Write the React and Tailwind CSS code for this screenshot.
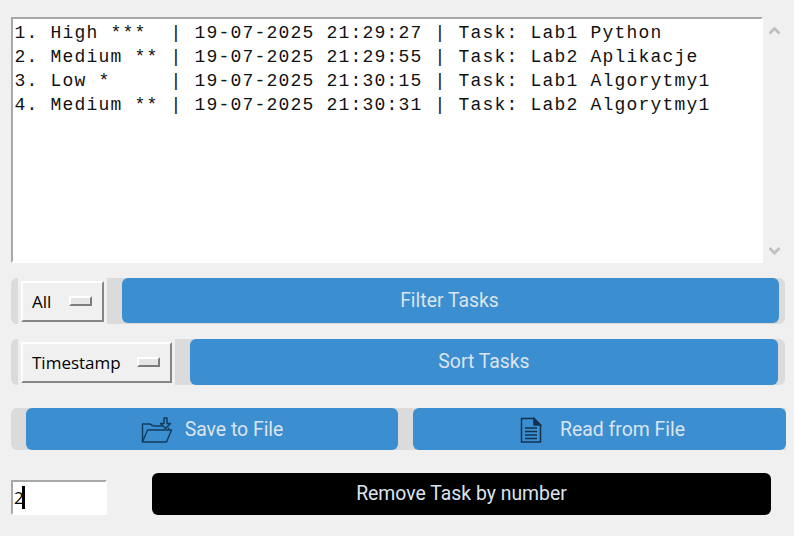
const TASKS = [
  '1. High ***  | 19-07-2025 21:29:27 | Task: Lab1 Python',
  '2. Medium ** | 19-07-2025 21:29:55 | Task: Lab2 Aplikacje',
  '3. Low *     | 19-07-2025 21:30:15 | Task: Lab1 Algorytmy1',
  '4. Medium ** | 19-07-2025 21:30:31 | Task: Lab2 Algorytmy1',
];

function Chevron({ up }) {
  return (
    <svg width="12" height="10" viewBox="0 0 12 10" fill="none" stroke="#bfbfbf" strokeWidth="2.700">
      <path d={up ? 'M.5 8.500 5.500 3.500l5 5' : 'M.5 2l5 5 5-5'} />
    </svg>
  );
}

function OptionMenu({ label, className }) {
  return (
    <div className={`flex h-[46px] shrink-0 items-start bg-[#f0f0f0] px-[3px] pt-[3px] ${className}`}>
      <button className="flex h-[41px] w-full items-center justify-between border-2 border-t-white border-r-[#858585] border-b-[#858585] border-l-white bg-[#f0f0f0] pr-[10px] pl-[9px] font-['Open_Sans',sans-serif] text-[17px] text-black">
        <span>{label}</span>
        <span className="mt-[-1px] h-[10px] w-[23px] border-2 border-t-white border-r-[#7c7c7c] border-b-[#7c7c7c] border-l-white bg-[#e6e6e6]" />
      </button>
    </div>
  );
}

function Button({ children, className }) {
  return (
    <button className={`flex shrink-0 items-center justify-center rounded-[6px] font-[Roboto,sans-serif] text-[19.4px] leading-none ${className}`}>
      {children}
    </button>
  );
}

function SaveIcon() {
  return (
    <svg width="32" height="28" viewBox="0 0 32 28" fill="none" stroke="#143c5c" strokeWidth="1.5" strokeLinejoin="round">
      <path d="M1.500 26V8h7.500q2 2 5 2h7M1.500 26 6.500 14H30.500l-5 12H1.500ZM27.500 14v-2.500" />
      <path d="M23 2h3v5.500h3.500L24.500 12.500l-5-5H23Z" />
    </svg>
  );
}

function FileIcon() {
  return (
    <svg width="22" height="26" viewBox="0 0 22 26" fill="none" stroke="#12324d" strokeWidth="1.5">
      <path d="M1.500 1.500H14l6.500 6.500v17H1.500Z" />
      <path d="M14 1.500v6.500h6.500Z" fill="#12324d" />
      <path d="M5 11h12M5 14.500h12M5 18h12M5 21.500h12" />
    </svg>
  );
}

export default function App() {
  return (
    <main className="flex h-[536px] w-[794px] flex-col overflow-hidden bg-[#f0f0f0] pt-[17px] pl-[11px]">
      <section className="flex h-[246px] w-[775px]">
        <div className="w-[752px] border-2 border-t-[#a8a8a8] border-r-white border-b-white border-l-[#a8a8a8] bg-white pt-[2px] pl-[1.500px] font-['Liberation_Mono',monospace] text-[18px] leading-[24px] tracking-[1.2px] text-[#111]">
          {TASKS.map((task) => (
            <div key={task} className="whitespace-pre">{task}</div>
          ))}
        </div>
        <div className="flex w-[23px] flex-col items-center justify-between pt-[8px] pb-[7px]">
          <Chevron up />
          <Chevron />
        </div>
      </section>

      <section className="mt-[15px] flex h-[46px] w-[774px] overflow-hidden rounded-[6px] bg-[#dbdbdb] pl-[7px]">
        <OptionMenu label="All" className="w-[89px]" />
        <Button className="ml-[15px] h-[45px] w-[657px] bg-[#3b8ed0] pr-[2px] text-[#dce4ee]">Filter Tasks</Button>
      </section>

      <section className="mt-[15px] flex h-[46px] w-[774px] overflow-hidden rounded-[6px] bg-[#dbdbdb] pl-[7px]">
        <OptionMenu label="Timestamp" className="w-[157px]" />
        <Button className="ml-[15px] h-[46px] w-[588px] bg-[#3b8ed0] text-[#dce4ee]">Sort Tasks</Button>
      </section>

      <section className="mt-[23px] flex h-[42px] w-[775px] rounded-l-[6px] bg-[#dbdbdb] pl-[15px]">
        <Button className="w-[372px] bg-[#3b8ed0] pt-[2px] text-[#dce4ee]">
          <SaveIcon />
          <span className="ml-[12px]">Save to File</span>
        </Button>
        <Button className="ml-[15px] w-[373px] bg-[#3b8ed0] pt-[2px] pl-[6px] text-[#dce4ee]">
          <FileIcon />
          <span className="ml-[18px]">Read from File</span>
        </Button>
      </section>

      <section className="mt-[23px] flex h-[42px] items-end">
        <div className="flex h-[35px] w-[96px] items-center border-2 border-t-[#a8a8a8] border-r-white border-b-white border-l-[#a8a8a8] bg-white pl-[1px]">
          <span className="w-[8px] font-['Open_Sans',sans-serif] text-[17px] tracking-[-1px] text-black">2</span>
          <span className="h-[23px] w-[3px] bg-black" />
        </div>
        <Button className="ml-[45px] h-[42px] w-[619px] bg-black text-[#dce4ee]">Remove Task by number</Button>
      </section>
    </main>
  );
}
